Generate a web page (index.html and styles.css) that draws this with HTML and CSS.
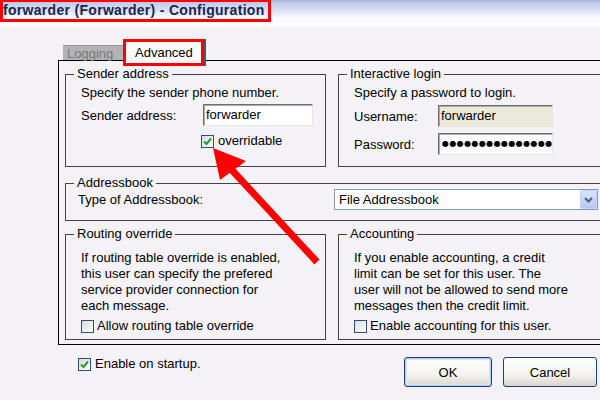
FILE: index.html
```html
<!DOCTYPE html>
<html lang="en">
<head>
    <meta charset="UTF-8">
    <title>forwarder (Forwarder) - Configuration</title>
    <link rel="stylesheet" href="styles.css">
</head>
<body>

<div class="window">
    <div class="titlebar"><span class="title">forwarder (Forwarder) - Configuration</span></div>

    <div class="tabs">
        <div class="tab">Logging</div>
        <div class="tab active">Advanced</div>
    </div>

    <div class="panel">
        <fieldset class="group">
            <legend>Sender address</legend>
            <div class="body body-top">
                <p>Specify the sender phone number.</p>
                <div class="field field-sender">
                    <label>Sender address:</label>
                    <div class="input">forwarder</div>
                </div>
                <div class="check-row override">
                    <span class="check"><svg width="11" height="11" viewBox="0 0 11 11"><path d="M2 5.5 L4.5 8 L9 2.5" fill="none" stroke="#22a12a" stroke-width="2"/></svg></span>
                    overridable
                </div>
            </div>
        </fieldset>

        <fieldset class="group">
            <legend>Interactive login</legend>
            <div class="body body-top">
                <p>Specify a password to login.</p>
                <div class="field field-login">
                    <label>Username:</label>
                    <div class="input readonly">forwarder</div>
                </div>
                <div class="field field-login second">
                    <label>Password:</label>
                    <div class="input password">●●●●●●●●●●●●●●●</div>
                </div>
            </div>
        </fieldset>

        <fieldset class="group wide">
            <legend>Addressbook</legend>
            <div class="body body-book">
                <div class="field field-book">
                    <label>Type of Addressbook:</label>
                    <div class="select">
                        <span>File Addressbook</span>
                        <span class="select-btn"><svg width="9" height="6" viewBox="0 0 9 6"><path d="M1 1 L4.5 4.5 L8 1" fill="none" stroke="#4d6185" stroke-width="2"/></svg></span>
                    </div>
                </div>
            </div>
        </fieldset>

        <fieldset class="group bottom">
            <legend>Routing override</legend>
            <div class="body body-low">
                <p class="text">If routing table override is enabled,<br>this user can specify the prefered<br>service provider connection for<br>each message.</p>
                <div class="check-row"><span class="check"></span>Allow routing table override</div>
            </div>
        </fieldset>

        <fieldset class="group bottom">
            <legend>Accounting</legend>
            <div class="body body-low">
                <p class="text">If you enable accounting, a credit<br>limit can be set for this user. The<br>user will not be allowed to send more<br>messages then the credit limit.</p>
                <div class="check-row"><span class="check"></span>Enable accounting for this user.</div>
            </div>
        </fieldset>
    </div>

    <div class="footer">
        <div class="check-row startup">
            <span class="check"><svg width="11" height="11" viewBox="0 0 11 11"><path d="M2 5.5 L4.5 8 L9 2.5" fill="none" stroke="#22a12a" stroke-width="2"/></svg></span>
            Enable on startup.
        </div>
        <div class="buttons">
            <button class="btn default">OK</button>
            <button class="btn cancel">Cancel</button>
        </div>
    </div>

    <!-- red annotation arrow drawn over the dialog -->
    <svg class="annotation" width="600" height="400" viewBox="0 0 600 400">
        <line x1="231" y1="169" x2="317" y2="262" stroke="#ff0000" stroke-width="7"/>
        <polygon points="213,148 220,180 246,161" fill="#ff0000"/>
    </svg>
</div>

</body>
</html>
```

FILE: styles.css
```css
html, body {
    margin: 0;
    background: #f4f2f6;
}
body {
    font-family: "Liberation Sans", Arial, sans-serif;
    font-size: 13px;
    color: #000;
}
.window {
    position: relative;
    width: 600px;
    height: 400px;
    overflow: hidden;
}
.titlebar {
    height: 27px;
    background: linear-gradient(to bottom, #a4b2d4 0, #c0cdeb 3px, #dce3f5 11px, #fbfcff 18px, #fdfdff 27px);
}
.title {
    display: inline-block;
    box-sizing: border-box;
    width: 271px;
    height: 22px;
    border: 3px solid #ff0000;
    border-top-width: 2px;
    padding-left: 0;
    font-weight: bold;
    font-size: 14px;
    letter-spacing: 0.3px;
    line-height: 16px;
    color: #1a2550;
    white-space: nowrap;
}
.tabs {
    display: flex;
    align-items: flex-end;
    height: 21px;
    margin-top: 12px;
    padding-left: 63px;
}
.tab {
    box-sizing: border-box;
    width: 62px;
    height: 15px;
    padding-left: 4px;
    line-height: 15px;
    background: #b3b3b5;
    color: #7a7a7a;
    border-top: 1px solid #9c9c9e;
}
.tab.active {
    position: relative;
    z-index: 1;
    width: 81px;
    height: 27px;
    margin-left: -2px;
    margin-bottom: -6px;
    padding-left: 9px;
    line-height: 21px;
    background: #fbfbfd;
    color: #000;
    border: 3px solid #ff0000;
    box-shadow: 2px 0 0 #555;
}
.panel {
    box-sizing: border-box;
    width: 560px;
    margin-left: 58px;
    padding: 6px 0 4px 6px;
    border: 1px solid #000;
    display: grid;
    grid-template-columns: 261px 265px;
    column-gap: 12px;
}
.group {
    margin: 0;
    padding: 0 0 0 8px;
    min-width: 0;
    border: 1px solid #444;
}
.group legend {
    padding: 0 3px;
    line-height: 14px;
}
.group.wide {
    grid-column: 1 / 3;
    margin-top: 9px;
}
.group.bottom {
    margin-top: 6px;
}
.body {
    box-sizing: border-box;
    padding-left: 7px;
}
.body p {
    margin: 0;
    line-height: 16px;
}
.body-top {
    height: 85px;
    padding-top: 4px;
}
.body-book {
    height: 31px;
    padding-left: 4px;
}
.body-low {
    height: 98px;
    padding-top: 9px;
}
.field {
    display: flex;
    align-items: center;
}
.field-sender {
    margin-top: 3px;
}
.field-sender label {
    width: 122px;
}
.field-login {
    margin-top: 4px;
}
.field-login.second {
    margin-top: 6px;
}
.field-login label {
    width: 84px;
}
.input {
    box-sizing: border-box;
    height: 22px;
    padding-left: 2px;
    line-height: 20px;
    background: #fff;
    border: 1px solid;
    border-color: #6e6e6e #e8e6de #e8e6de #6e6e6e;
    box-shadow: inset 1px 1px 0 #a9a9a9;
}
.field-sender .input {
    width: 110px;
}
.field-login .input {
    width: 115px;
}
.input.readonly {
    background: #ebe9da;
}
.input.password {
    font-family: "DejaVu Sans", sans-serif;
    font-size: 8px;
    letter-spacing: 0.4px;
    padding-left: 3px;
    white-space: nowrap;
}
.field-book {
    margin-top: -1px;
}
.field-book label {
    width: 256px;
}
.select {
    box-sizing: border-box;
    width: 264px;
    height: 21px;
    display: flex;
    align-items: center;
    justify-content: space-between;
    padding-left: 4px;
    background: #fff;
    border: 1px solid #7f9db9;
}
.select-btn {
    box-sizing: border-box;
    width: 17px;
    height: 19px;
    display: flex;
    align-items: center;
    justify-content: center;
    background: linear-gradient(to bottom, #d8e4fc, #b4c7f4);
    border: 1px solid #c3d3fd;
    border-radius: 2px;
}
.check-row {
    display: flex;
    align-items: center;
    gap: 4px;
    line-height: 16px;
}
.override {
    margin-top: 7px;
    padding-left: 120px;
}
.body-low .check-row {
    margin-top: 4px;
    gap: 3px;
}
.check {
    box-sizing: border-box;
    width: 13px;
    height: 13px;
    display: flex;
    align-items: center;
    justify-content: center;
    border: 1px solid #2c4e78;
    background: linear-gradient(135deg, #dcdcd6, #fdfdfd);
}
.footer {
    display: flex;
    align-items: flex-start;
    margin-top: 12px;
    padding: 0 3px 0 78px;
}
.startup {
    line-height: 14px;
}
.buttons {
    display: flex;
    gap: 11px;
    margin-left: auto;
}
.btn {
    box-sizing: border-box;
    height: 30px;
    font-family: "Liberation Sans", Arial, sans-serif;
    font-size: 13px;
    color: #000;
    background: linear-gradient(to bottom, #ffffff, #f3f2ee 60%, #d9d5cb);
    border: 1px solid #1c3f6e;
    border-radius: 3px;
}
.btn.default {
    width: 88px;
    box-shadow: inset 0 0 0 1px #b7cdf3, inset 0 0 0 2px #d3e2fb;
}
.btn.cancel {
    width: 94px;
}
.annotation {
    position: absolute;
    left: 0;
    top: 0;
    pointer-events: none;
}
```
